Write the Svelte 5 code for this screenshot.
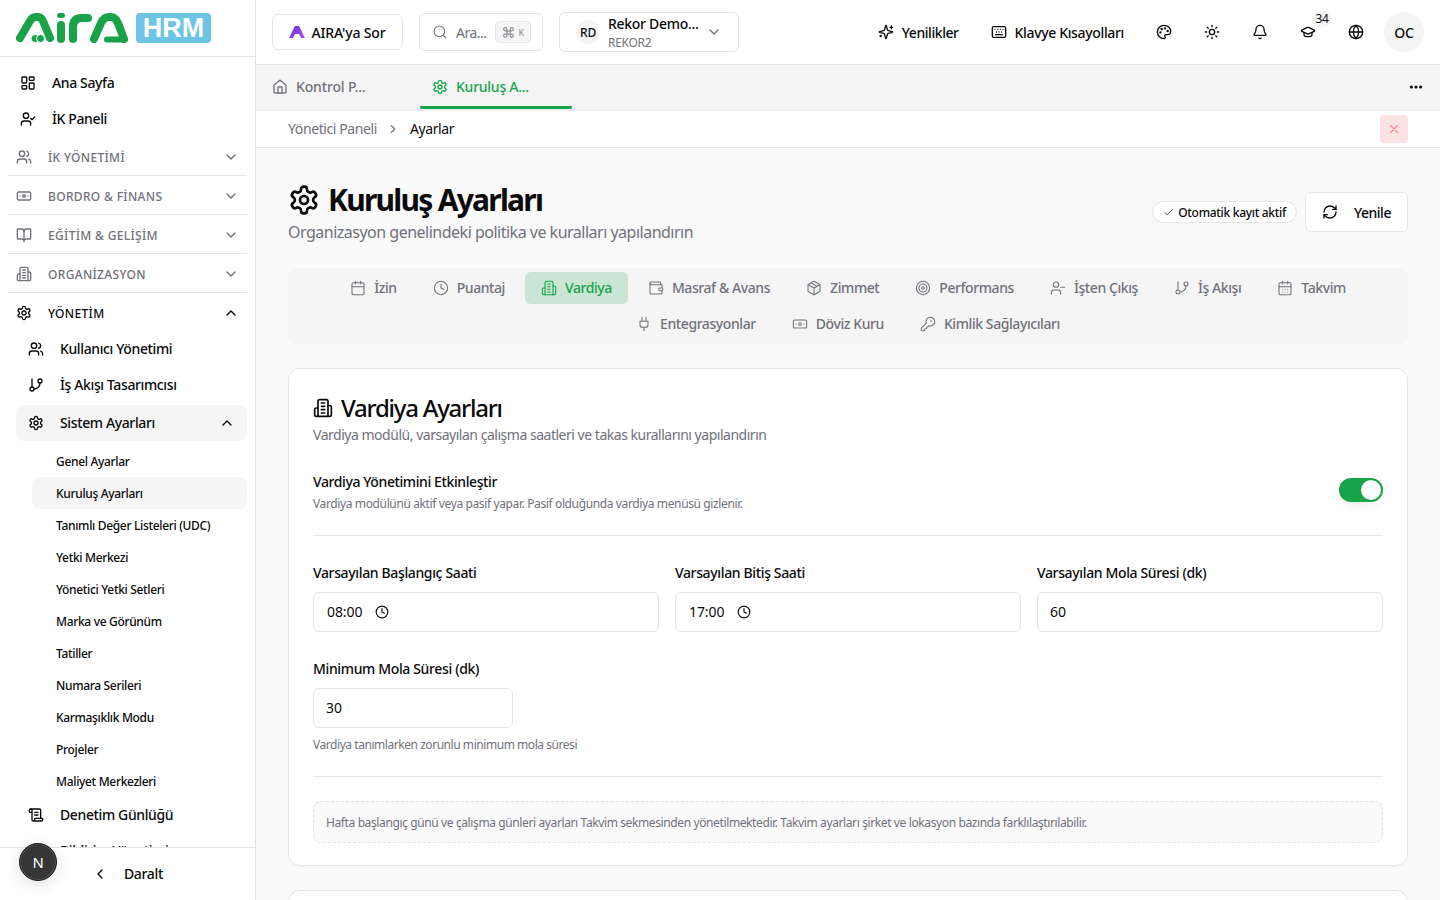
<script>
const I = {
  dash:'<rect x="3" y="3" width="7" height="9" rx="1"/><rect x="14" y="3" width="7" height="5" rx="1"/><rect x="14" y="12" width="7" height="9" rx="1"/><rect x="3" y="16" width="7" height="5" rx="1"/>',
  ucheck:'<path d="M16 21v-2a4 4 0 0 0-4-4H6a4 4 0 0 0-4 4v2"/><circle cx="9" cy="7" r="4"/><polyline points="16 11 18 13 22 9"/>',
  users:'<path d="M16 21v-2a4 4 0 0 0-4-4H6a4 4 0 0 0-4 4v2"/><circle cx="9" cy="7" r="4"/><path d="M22 21v-2a4 4 0 0 0-3-3.87"/><path d="M16 3.13a4 4 0 0 1 0 7.75"/>',
  bank:'<rect x="2" y="6" width="20" height="12" rx="2"/><circle cx="12" cy="12" r="2"/><path d="M6 12h.01M18 12h.01"/>',
  book:'<path d="M12 7v14"/><path d="M3 18a1 1 0 0 1-1-1V4a1 1 0 0 1 1-1h5a4 4 0 0 1 4 4 4 4 0 0 1 4-4h5a1 1 0 0 1 1 1v13a1 1 0 0 1-1 1h-6a3 3 0 0 0-3 3 3 3 0 0 0-3-3z"/>',
  bld:'<path d="M6 22V4a2 2 0 0 1 2-2h8a2 2 0 0 1 2 2v18Z"/><path d="M6 12H4a2 2 0 0 0-2 2v6a2 2 0 0 0 2 2h2"/><path d="M18 9h2a2 2 0 0 1 2 2v9a2 2 0 0 1-2 2h-2"/><path d="M10 6h4M10 10h4M10 14h4M10 18h4"/>',
  gear:'<path d="M12.22 2h-.44a2 2 0 0 0-2 2v.18a2 2 0 0 1-1 1.73l-.43.25a2 2 0 0 1-2 0l-.15-.08a2 2 0 0 0-2.73.73l-.22.38a2 2 0 0 0 .73 2.73l.15.1a2 2 0 0 1 1 1.72v.51a2 2 0 0 1-1 1.74l-.15.09a2 2 0 0 0-.73 2.73l.22.38a2 2 0 0 0 2.73.73l.15-.08a2 2 0 0 1 2 0l.43.25a2 2 0 0 1 1 1.73V20a2 2 0 0 0 2 2h.44a2 2 0 0 0 2-2v-.18a2 2 0 0 1 1-1.73l.43-.25a2 2 0 0 1 2 0l.15.08a2 2 0 0 0 2.73-.73l.22-.39a2 2 0 0 0-.73-2.73l-.15-.08a2 2 0 0 1-1-1.74v-.5a2 2 0 0 1 1-1.74l.15-.09a2 2 0 0 0 .73-2.73l-.22-.38a2 2 0 0 0-2.73-.73l-.15.08a2 2 0 0 1-2 0l-.43-.25a2 2 0 0 1-1-1.73V4a2 2 0 0 0-2-2z"/><circle cx="12" cy="12" r="3"/>',
  branch:'<line x1="6" y1="3" x2="6" y2="15"/><circle cx="18" cy="6" r="3"/><circle cx="6" cy="18" r="3"/><path d="M18 9a9 9 0 0 1-9 9"/>',
  scroll:'<path d="M15 12h-5M15 8h-5M19 17V5a2 2 0 0 0-2-2H4"/><path d="M8 21h12a2 2 0 0 0 2-2v-1a1 1 0 0 0-1-1H11a1 1 0 0 0-1 1v1a2 2 0 1 1-4 0V5a2 2 0 1 0-4 0v2a1 1 0 0 0 1 1h3"/>',
  down:'<path d="m6 9 6 6 6-6"/>', up:'<path d="m18 15-6-6-6 6"/>', left:'<path d="m15 18-6-6 6-6"/>', right:'<path d="m9 18 6-6-6-6"/>',
  search:'<circle cx="11" cy="11" r="8"/><path d="m21 21-4.3-4.3"/>',
  cmd:'<path d="M15 6v12a3 3 0 1 0 3-3H6a3 3 0 1 0 3 3V6a3 3 0 1 0-3 3h12a3 3 0 1 0-3-3"/>',
  home:'<path d="M15 21v-8a1 1 0 0 0-1-1h-4a1 1 0 0 0-1 1v8"/><path d="M3 10a2 2 0 0 1 .709-1.528l7-5.999a2 2 0 0 1 2.582 0l7 5.999A2 2 0 0 1 21 10v9a2 2 0 0 1-2 2H5a2 2 0 0 1-2-2z"/>',
  spark:'<path d="M9.937 15.5A2 2 0 0 0 8.5 14.063l-6.135-1.582a.5.5 0 0 1 0-.962L8.5 9.936A2 2 0 0 0 9.937 8.5l1.582-6.135a.5.5 0 0 1 .963 0L14.063 8.5A2 2 0 0 0 15.5 9.937l6.135 1.581a.5.5 0 0 1 0 .964L15.5 14.063a2 2 0 0 0-1.437 1.437l-1.582 6.135a.5.5 0 0 1-.963 0z"/><path d="M20 3v4M22 5h-4M4 17v2M5 18H3"/>',
  kbd:'<path d="M10 8h.01M12 12h.01M14 8h.01M16 12h.01M18 8h.01M6 8h.01M7 16h10M8 12h.01"/><rect x="2" y="4" width="20" height="16" rx="2"/>',
  palette:'<path d="M12 22a1 1 0 0 1 0-20 10 9 0 0 1 10 9 5 5 0 0 1-5 5h-2.25a1.75 1.75 0 0 0-1.4 2.8l.3.4a1.75 1.75 0 0 1-1.4 2.8z"/><circle cx="13.5" cy="6.5" r=".8" fill="currentColor"/><circle cx="17.5" cy="10.5" r=".8" fill="currentColor"/><circle cx="6.5" cy="12.5" r=".8" fill="currentColor"/><circle cx="8.5" cy="7.5" r=".8" fill="currentColor"/>',
  sun:'<circle cx="12" cy="12" r="4"/><path d="M12 2v2M12 20v2M4.93 4.93l1.41 1.41M17.66 17.66l1.41 1.41M2 12h2M20 12h2M6.34 17.66l-1.41 1.41M19.07 4.93l-1.41 1.41"/>',
  bell:'<path d="M10.268 21a2 2 0 0 0 3.464 0"/><path d="M3.262 15.326A1 1 0 0 0 4 17h16a1 1 0 0 0 .74-1.673C19.41 13.956 18 12.499 18 8A6 6 0 0 0 6 8c0 4.499-1.411 5.956-2.738 7.326"/>',
  grad:'<path d="M21.42 10.922a1 1 0 0 0-.019-1.838L12.83 5.18a2 2 0 0 0-1.66 0L2.6 9.08a1 1 0 0 0 0 1.832l8.57 3.908a2 2 0 0 0 1.66 0z"/><path d="M6 12.5V16a6 3 0 0 0 12 0v-3.5"/>',
  globe:'<circle cx="12" cy="12" r="10"/><path d="M12 2a14.5 14.5 0 0 0 0 20 14.5 14.5 0 0 0 0-20"/><path d="M2 12h20"/>',
  refresh:'<path d="M3 12a9 9 0 0 1 9-9 9.75 9.75 0 0 1 6.74 2.74L21 8"/><path d="M21 3v5h-5"/><path d="M21 12a9 9 0 0 1-9 9 9.75 9.75 0 0 1-6.74-2.74L3 16"/><path d="M8 16H3v5"/>',
  cal:'<path d="M8 2v4M16 2v4"/><rect x="3" y="4" width="18" height="18" rx="2"/><path d="M3 10h18"/>',
  clock:'<circle cx="12" cy="12" r="10"/><polyline points="12 6 12 12 16 14"/>',
  wallet:'<path d="M19 7V4a1 1 0 0 0-1-1H5a2 2 0 0 0 0 4h15a1 1 0 0 1 1 1v4h-3a2 2 0 0 0 0 4h3a1 1 0 0 0 1-1v-2a1 1 0 0 0-1-1"/><path d="M3 5v14a2 2 0 0 0 2 2h15a1 1 0 0 0 1-1v-4"/>',
  box:'<path d="M21 8a2 2 0 0 0-1-1.73l-7-4a2 2 0 0 0-2 0l-7 4A2 2 0 0 0 3 8v8a2 2 0 0 0 1 1.73l7 4a2 2 0 0 0 2 0l7-4A2 2 0 0 0 21 16Z"/><path d="m3.3 7 8.7 5 8.7-5M12 22V12M7.5 4.27l9 5.15"/>',
  target:'<circle cx="12" cy="12" r="10"/><circle cx="12" cy="12" r="6"/><circle cx="12" cy="12" r="2"/>',
  uminus:'<path d="M16 21v-2a4 4 0 0 0-4-4H6a4 4 0 0 0-4 4v2"/><circle cx="9" cy="7" r="4"/><line x1="22" y1="11" x2="16" y2="11"/>',
  caldays:'<path d="M8 2v4M16 2v4"/><rect x="3" y="4" width="18" height="18" rx="2"/><path d="M3 10h18M8 14h.01M12 14h.01M16 14h.01M8 18h.01M12 18h.01M16 18h.01"/>',
  plug:'<path d="M12 22v-5M9 8V2M15 8V2M18 8v5a4 4 0 0 1-4 4h-4a4 4 0 0 1-4-4V8Z"/>',
  key:'<path d="M2.586 17.414A2 2 0 0 0 2 18.828V21a1 1 0 0 0 1 1h3a1 1 0 0 0 1-1v-1a1 1 0 0 1 1-1h1a1 1 0 0 0 1-1v-1a1 1 0 0 1 1-1h.172a2 2 0 0 0 1.414-.586l.814-.814a6.5 6.5 0 1 0-4-4z"/><circle cx="16.5" cy="7.5" r=".5" fill="currentColor"/>',
  check:'<path d="M20 6 9 17l-5-5"/>',
  x:'<path d="M18 6 6 18M6 6l12 12"/>',
  dots:'<circle cx="5" cy="12" r="1.4" fill="currentColor"/><circle cx="12" cy="12" r="1.4" fill="currentColor"/><circle cx="19" cy="12" r="1.4" fill="currentColor"/>'
};
const sections = [['users','İK YÖNETİMİ'],['bank','BORDRO & FİNANS'],['book','EĞİTİM & GELİŞİM'],['bld','ORGANİZASYON']];
const subs = ['Genel Ayarlar','Kuruluş Ayarları','Tanımlı Değer Listeleri (UDC)','Yetki Merkezi','Yönetici Yetki Setleri','Marka ve Görünüm','Tatiller','Numara Serileri','Karmaşıklık Modu','Projeler','Maliyet Merkezleri'];
const tabsA = [['cal','İzin'],['clock','Puantaj'],['bld','Vardiya'],['wallet','Masraf & Avans'],['box','Zimmet'],['target','Performans'],['uminus','İşten Çıkış'],['branch','İş Akışı'],['caldays','Takvim'],['plug','Entegrasyonlar'],['bank','Döviz Kuru'],['key','Kimlik Sağlayıcıları']];
</script>

{#snippet icon(name, size = 16, sw = 2)}
  <svg class="ic" width={size} height={size} viewBox="0 0 24 24" fill="none" stroke="currentColor" stroke-width={sw} stroke-linecap="round" stroke-linejoin="round">{@html I[name]}</svg>
{/snippet}

<div class="app">
  <aside>
    <div class="logo">
      <svg width="112" height="30" viewBox="0 0 112 30" fill="none" stroke="#18a34a" stroke-width="8" stroke-linecap="round" stroke-linejoin="round">
        <path d="M4 25 14 8Q16 4 20 4H22Q25 4 27 8L34 25"/>
        <circle cx="19" cy="25.500" r="4" fill="#18a34a" stroke="#fff" stroke-width="1"/>
        <circle cx="24.500" cy="25.500" r="4" fill="#18a34a" stroke="#fff" stroke-width="1"/>
        <path d="M45 12v14"/>
        <rect x="41" y="0" width="8" height="5" rx="2.500" fill="#18a34a" stroke="none"/>
        <path d="M57 26V14Q57 5 66 5H72"/>
        <path d="M78 26 85 10Q88 4 93 4H95Q99 4 102 10L108 26"/>
        <path d="M91 26.500H108" stroke-width="6"/>
      </svg>
      <div class="hrm">HRM</div>
    </div>
    <nav>
      <a class="item top">{@render icon('dash')}<span>Ana Sayfa</span></a>
      <a class="item top">{@render icon('ucheck')}<span>İK Paneli</span></a>
      {#each sections as s}
        <div class="sec">{@render icon(s[0])}<span>{s[1]}</span><i class="chev">{@render icon('down')}</i></div>
      {/each}
      <div class="sec open">{@render icon('gear')}<span>YÖNETİM</span><i class="chev">{@render icon('up')}</i></div>
      <a class="item lvl">{@render icon('users')}<span>Kullanıcı Yönetimi</span></a>
      <a class="item lvl">{@render icon('branch')}<span>İş Akışı Tasarımcısı</span></a>
      <a class="item lvl cur">{@render icon('gear')}<span>Sistem Ayarları</span><i class="chev">{@render icon('up')}</i></a>
      <div class="subs">
        {#each subs as s, i}
          <a class="sub" class:on={i === 1}>{s}</a>
        {/each}
      </div>
      <a class="item lvl">{@render icon('scroll')}<span>Denetim Günlüğü</span></a>
      <a class="item lvl">{@render icon('bld')}<span>Bildirim Yönetimi</span></a>
    </nav>
    <div class="foot">
      {@render icon('left')}<span>Daralt</span>
      <div class="nbtn">N</div>
    </div>
  </aside>

  <main>
    <header>
      <button class="ask">
        <svg width="16" height="14" viewBox="0 0 16 14"><defs><linearGradient id="ag" x1="0" y1="0" x2="1" y2="1"><stop offset="0" stop-color="#6d28d9"/><stop offset="1" stop-color="#a855f7"/></linearGradient></defs><path d="M6 1h4l6 12h-4L10 9H6l-2 4H0Z" fill="url(#ag)"/></svg>
        AIRA'ya Sor
      </button>
      <div class="search">
        {@render icon('search', 16, 1.6)}<span>Ara...</span>
        <span class="kb">{@render icon('cmd', 13, 2)}<small>K</small></span>
      </div>
      <div class="tenant">
        <span class="rd">RD</span>
        <span class="tn"><b>Rekor Demo...</b><em>REKOR2</em></span>
        {@render icon('down')}
      </div>
      <div class="hright">
        <button class="hl">{@render icon('spark')}Yenilikler</button>
        <button class="hl kl">{@render icon('kbd')}Klavye Kısayolları</button>
        <button class="hi">{@render icon('palette')}</button>
        <button class="hi">{@render icon('sun')}</button>
        <button class="hi">{@render icon('bell')}</button>
        <button class="hi">{@render icon('grad')}<span class="cnt">34</span></button>
        <button class="hi">{@render icon('globe')}</button>
        <span class="oc">OC</span>
      </div>
    </header>

    <div class="wintabs">
      <div class="wt first">{@render icon('home')}<span>Kontrol P...</span></div>
      <div class="wt act">{@render icon('gear')}<span>Kuruluş A...</span></div>
      <div class="more">{@render icon('dots')}</div>
    </div>

    <div class="crumb">
      <span class="c1">Yönetici Paneli</span>
      <span class="c2">{@render icon('right', 14)}</span>
      <span class="c3">Ayarlar</span>
      <button class="close">{@render icon('x', 14)}</button>
    </div>

    <div class="content">
      <div class="head">
        <div>
          <h1>{@render icon('gear', 32, 2)}<span>Kuruluş Ayarları</span></h1>
          <p class="lead">Organizasyon genelindeki politika ve kuralları yapılandırın</p>
        </div>
        <div class="hact">
          <span class="auto">{@render icon('check', 11, 1.6)}Otomatik kayıt aktif</span>
          <button class="reload">{@render icon('refresh')}Yenile</button>
        </div>
      </div>

      <div class="stabs">
        {#each tabsA as t}
          <div class="st" class:on={t[1] === 'Vardiya'}>{@render icon(t[0], 16, 1.6)}<span>{t[1]}</span></div>
        {/each}
      </div>

      <section class="card">
        <h2>{@render icon('bld', 20, 2)}<span>Vardiya Ayarları</span></h2>
        <p class="cd">Vardiya modülü, varsayılan çalışma saatleri ve takas kurallarını yapılandırın</p>
        <div class="trow">
          <div>
            <div class="tl">Vardiya Yönetimini Etkinleştir</div>
            <div class="small">Vardiya modülünü aktif veya pasif yapar. Pasif olduğunda vardiya menüsü gizlenir.</div>
          </div>
          <span class="toggle"><i></i></span>
        </div>
        <hr />
        <div class="grid">
          <div><label>Varsayılan Başlangıç Saati</label><div class="inp"><span>08:00</span>{@render icon('clock', 14, 2)}</div></div>
          <div><label>Varsayılan Bitiş Saati</label><div class="inp"><span>17:00</span>{@render icon('clock', 14, 2)}</div></div>
          <div><label>Varsayılan Mola Süresi (dk)</label><div class="inp n"><span>60</span></div></div>
        </div>
        <div class="minb">
          <label>Minimum Mola Süresi (dk)</label>
          <div class="inp n w"><span>30</span></div>
          <div class="small help">Vardiya tanımlarken zorunlu minimum mola süresi</div>
        </div>
        <hr class="h2" />
        <div class="info">Hafta başlangıç günü ve çalışma günleri ayarları Takvim sekmesinden yönetilmektedir. Takvim ayarları şirket ve lokasyon bazında farklılaştırılabilir.</div>
      </section>
      <section class="card next"></section>
    </div>
  </main>
</div>

<style>
  :global(body) { margin: 0; background: #fafafa; color: #0a0a0a; font-family: "Noto Sans", "Open Sans", sans-serif; font-size: 14px; }
  button { font: inherit; color: inherit; background: none; border: 0; padding: 0; cursor: pointer; }
  a { color: inherit; }
  .ic { flex: none; display: block; }
  .app { display: flex; height: 900px; width: 1440px; overflow: hidden; }

  aside { width: 255px; flex: none; border-right: 1px solid #e5e5e5; background: #fff; display: flex; flex-direction: column; position: relative; height: 900px; }
  .logo { flex: none; border-bottom: 1px solid #e5e5e5; display: flex; align-items: flex-start; padding: 13px 0 0 16px; box-sizing: border-box; height: 57px; gap: 8px; }
  .hrm { width: 75px; height: 30px; background: #6cc5e4; border-radius: 4px; color: #fff; font: 700 27px/30px "Liberation Sans", sans-serif; text-align: center; }
  nav { flex: 1; min-height: 0; overflow: hidden; padding: 8px 8px 0; }
  .item { display: flex; align-items: center; height: 36px; gap: 16px; font-weight: 500; font-size: 14px; letter-spacing: -.38px; }
  .item span { margin-top: -2px; }
  .item.top { padding-left: 12px; }
  .item.lvl { margin-left: 8px; padding-left: 12px; }
  .item.cur { background: #f5f5f5; border-radius: 8px; padding-right: 12px; margin-top: 2px; }
  .chev { margin-left: auto; color: inherit; }
  .sec { height: 36px; padding: 2px 8px 0; border-bottom: 1px solid #e5e5e5; display: flex; align-items: center; gap: 16px; color: #71717a; font-size: 12px; font-weight: 500; letter-spacing: .33px; }
  .sec.open { border: 0; color: #0a0a0a; height: 36px; }
  .subs { padding-top: 4px; }
  .sub { display: flex; align-items: center; height: 32px; margin-left: 24px; padding-left: 24px; font-size: 12px; font-weight: 500; letter-spacing: -.33px; border-radius: 8px; }
  .sub.on { background: #f5f5f5; }
  .foot { height: 53px; flex: none; border-top: 1px solid #e5e5e5; background: #fff; display: flex; align-items: center; justify-content: center; gap: 16px; font-weight: 500; letter-spacing: -.3px; box-sizing: border-box; position: relative; }
  .foot span { margin-top: -2px; }
  .nbtn { position: absolute; left: 19px; top: -5px; width: 38px; height: 38px; border-radius: 50%; background: #363636; border: 1px solid #1c1c1c; box-sizing: border-box; color: #fff; font: 400 15px/37px "Liberation Sans", sans-serif; text-align: center; box-shadow: inset 0 0 0 1px #555, 0 4px 16px rgba(0,0,0,.12); }

  main { flex: 1; min-width: 0; display: flex; flex-direction: column; }
  header { height: 65px; flex: none; box-sizing: border-box; border-bottom: 1px solid #e5e5e5; background: #fff; display: flex; align-items: center; padding: 0 16px; }
  .ask { width: 131px; height: 36px; box-sizing: border-box; border: 1px solid #e5e5e5; border-radius: 6px; display: flex; align-items: center; justify-content: center; gap: 6px; font-weight: 500; letter-spacing: -.15px; }
  .search { margin-left: 16px; width: 124px; height: 38px; box-sizing: border-box; border: 1px solid #e5e5e5; border-radius: 6px; display: flex; align-items: center; padding-left: 12px; gap: 8px; color: #71717a; letter-spacing: -.5px; }
  .kb { display: flex; align-items: center; gap: 4px; background: #f5f5f5; border: 1px solid #e5e5e5; border-radius: 4px; height: 20px; padding: 0 6px; color: #8a8a94; }
  .kb small { font-size: 9px; }
  .tenant { margin-left: 16px; width: 180px; height: 40px; box-sizing: border-box; border: 1px solid #e5e5e5; border-radius: 6px; display: flex; align-items: center; padding: 0 16px; color: #71717a; }
  .rd { width: 24px; height: 24px; border-radius: 50%; background: #f5f5f5; color: #0a0a0a; font-size: 12px; font-weight: 500; display: flex; align-items: center; justify-content: center; flex: none; letter-spacing: -.3px; }
  .tn { margin-left: 8px; display: flex; flex-direction: column; width: 100px; line-height: 19px; padding-top: 2px; }
  .tn b { font-weight: 500; color: #0a0a0a; font-size: 14px; letter-spacing: -.3px; }
  .tn em { font-style: normal; font-size: 12px; color: #71717a; letter-spacing: -.3px; }
  .hright { margin-left: auto; display: flex; align-items: center; }
  .hl { display: flex; align-items: center; gap: 8px; font-weight: 500; letter-spacing: -.45px; margin-right: 32px; }
  .hl.kl { letter-spacing: -.35px; }
  .hi { width: 40px; height: 40px; margin-right: 8px; display: flex; align-items: center; justify-content: center; position: relative; }
  .hi:nth-child(3) { margin-left: -12px; }
  .cnt { position: absolute; left: 25px; top: -2px; width: 18px; height: 18px; border-radius: 50%; background: #f5f5f5; font-size: 12px; line-height: 18px; text-align: center; letter-spacing: -.3px; }
  .oc { width: 40px; height: 40px; border-radius: 50%; background: #f5f5f5; display: flex; align-items: center; justify-content: center; font-weight: 500; letter-spacing: -.2px; }

  .wintabs { height: 46px; flex: none; box-sizing: border-box; background: #f5f5f5; border-bottom: 2px solid #ededed; display: flex; color: #71717a; font-weight: 500; letter-spacing: -.15px; }
  .wt { display: flex; align-items: center; gap: 8px; height: 44px; box-sizing: border-box; }
  .wt.first span { margin-top: -2px; }
  .wt.first { width: 164px; padding-left: 16px; }
  .wt.act { width: 152px; padding-left: 12px; color: #16a34a; border-bottom: 3px solid #16a34a; border-radius: 0 0 2px 2px; padding-top: 2px; letter-spacing: -.25px; }
  .more { margin-left: auto; color: #0a0a0a; margin-right: 16px; height: 44px; display: flex; align-items: center; }
  .crumb { height: 37px; flex: none; box-sizing: border-box; background: #fff; border-bottom: 1px solid #e5e5e5; display: flex; align-items: center; padding: 0 32px; letter-spacing: -.4px; }
  .c1, .c3 { margin-top: -2px; }
  .c1 { color: #71717a; }
  .c2 { margin: 0 10px 0 9px; color: #71717a; }
  .close { margin-left: auto; width: 28px; height: 28px; border-radius: 4px; background: #fde2e2; color: #f18b8b; display: flex; align-items: center; justify-content: center; }

  .content { flex: 1; min-height: 0; overflow: hidden; padding: 32px; background: #fafafa; }
  .head { display: flex; justify-content: space-between; align-items: flex-start; height: 88px; }
  h1 { margin: 0; display: flex; align-items: center; gap: 8px; font-size: 30px; line-height: 40px; font-weight: 700; letter-spacing: -1.75px; }
  .lead { margin: 0; font-size: 16px; line-height: 24px; color: #71717a; letter-spacing: -.5px; }
  .hact { display: flex; align-items: center; gap: 8px; margin-top: 12px; }
  .auto { display: flex; align-items: center; gap: 4px; height: 22px; box-sizing: border-box; border: 1px solid #e5e5e5; border-radius: 11px; padding: 0 10px; font-size: 12px; font-weight: 500; letter-spacing: -.3px; background: #fff; }
  .reload { height: 40px; width: 103px; box-sizing: border-box; border: 1px solid #e5e5e5; border-radius: 6px; background: #fff; display: flex; align-items: center; justify-content: center; gap: 16px; font-weight: 500; letter-spacing: -.5px; }
  .stabs { background: #f5f5f5; border-radius: 8px; padding: 4px; display: flex; flex-wrap: wrap; justify-content: center; gap: 4px; }
  .st { height: 32px; padding: 0 16px; display: flex; align-items: center; gap: 8px; color: #71717a; font-weight: 500; border-radius: 6px; letter-spacing: -.42px; }
  .st span { margin-top: -1px; }
  .st.on { background: #c9e6d4; color: #16a34a; }
  .card { margin-top: 24px; background: #fff; border: 1px solid #e5e5e5; border-radius: 12px; padding: 25px 24px 24px; box-sizing: border-box; height: 498px; box-shadow: 0 1px 2px rgba(0,0,0,.03); }
  .card.next { height: 120px; }
  h2 { margin: 0; display: flex; align-items: center; gap: 8px; font-size: 24px; line-height: 28px; font-weight: 500; letter-spacing: -1.25px; }
  .cd { margin: 3px 0 0; color: #71717a; font-size: 14px; line-height: 20px; letter-spacing: -.48px; }
  .trow { margin-top: 27px; display: flex; justify-content: space-between; align-items: flex-start; }
  .tl { font-weight: 500; line-height: 20px; letter-spacing: -.4px; }
  .small { font-size: 12px; line-height: 16px; color: #71717a; letter-spacing: -.375px; margin-top: 4px; }
  .toggle { width: 44px; height: 24px; margin-top: 6px; border-radius: 12px; background: #16a34a; position: relative; box-shadow: 0 4px 10px rgba(0,0,0,.06); }
  .toggle i { position: absolute; right: 2px; top: 2px; width: 20px; height: 20px; border-radius: 50%; background: #fff; }
  hr { border: 0; border-top: 1px solid #e5e5e5; margin: 23px 0 0; }
  .grid { margin-top: 27px; display: grid; grid-template-columns: repeat(3, 1fr); gap: 16px; }
  label { display: block; font-weight: 500; line-height: 20px; letter-spacing: -.36px; margin-bottom: 9px; }
  .inp { height: 40px; box-sizing: border-box; border: 1px solid #e5e5e5; border-radius: 6px; background: #fff; display: flex; align-items: center; padding-left: 13px; gap: 13px; letter-spacing: -.1px; }
  .inp span { margin-top: -1px; }
  .inp.n { padding-left: 12px; }
  .inp.w { width: 200px; }
  .minb { margin-top: 27px; }
  .small.help { margin-top: 9px; letter-spacing: -.45px; }
  hr.h2 { margin-top: 23px; }
  .info { margin-top: 24px; height: 42px; box-sizing: border-box; border: 1px dashed #e5e5e5; border-radius: 8px; background: #fafafa; padding: 0 12px; display: flex; align-items: center; font-size: 12px; color: #71717a; letter-spacing: -.385px; }
</style>
